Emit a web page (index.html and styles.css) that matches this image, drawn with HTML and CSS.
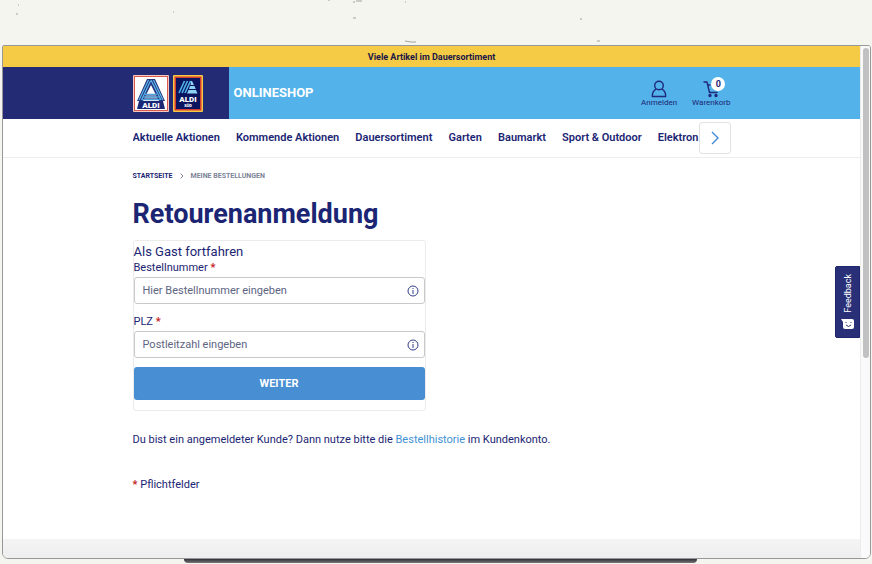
FILE: index.html
```html
<!DOCTYPE html>
<html lang="de">
<head>
<meta charset="utf-8">
<meta name="viewport" content="width=device-width, initial-scale=1">
<title>Retourenanmeldung</title>
<link rel="stylesheet" href="styles.css">
</head>
<body>
<svg class="specks" width="600" height="45" viewBox="0 0 600 45" aria-hidden="true">
  <path d="M16 14h2M18 5h1M173 12h1M328 0h2M353 2h2M356 1h6M405 2h1M353 18h3M405 41l6 1h5M580 19h2M597 41h3" fill="none" stroke="#a3a39f"/>
</svg>
<div class="window">
  <div class="page">
    <div class="promo">Viele Artikel im Dauersortiment</div>
    <header class="header">
      <div class="container header-row">
        <a class="brand" href="#" aria-label="Startseite">
          <svg width="36" height="37" viewBox="0 0 36 37" aria-hidden="true">
            <rect width="36" height="37" rx="1" fill="#f4c9c2"/>
            <rect x="1" y="1" width="34" height="35" fill="#d9594c"/>
            <rect x="2" y="2" width="32" height="33" fill="#fff"/>
            <path d="M14 4h8l10 22h-6L18 10l-8 16H4z" fill="#26307c"/>
            <path d="M15.500 5 6 25M17.500 6 8.500 25M18 5l10 20M20.500 5l9.500 20" fill="none" stroke="#58b5e8" stroke-width="1.300"/>
            <path d="M12 19.500h12M10 22h16M9 24.500h18" stroke="#4aa4dc" stroke-width="1.500"/>
            <path d="M12 20.800h13M10 23.300h16" stroke="#26307c" stroke-width=".7"/>
            <path d="M6 26h24l2 8H4z" fill="#1b2875"/>
            <text class="logo-text" x="18" y="33" font-size="8">ALDI</text>
          </svg>
          <svg width="30" height="37" viewBox="0 0 30 37" aria-hidden="true">
            <rect width="30" height="37" rx="1" fill="#f6c944"/>
            <rect x="1.500" y="1.500" width="27" height="34" fill="#d43b31"/>
            <rect x="3" y="3" width="24" height="31" fill="#0b155f"/>
            <path d="M11.500 6 6 18M14.500 6 9 18M17.500 6 12 18" fill="none" stroke="#4fb3ea" stroke-width="1.600"/>
            <path d="M18 6h1l2 4h-3.500zM17 11h4.500l1.200 3H16zM15.500 15H23l1.500 3.500H14z" fill="#8fd3f3"/>
            <text class="logo-text" x="15" y="27" font-size="8">ALDI</text>
            <text class="logo-text" x="15" y="32" font-size="4">SÜD</text>
          </svg>
        </a>
        <span class="shop-name">ONLINESHOP</span>
        <div class="actions">
          <a class="action" href="#">
            <svg width="16" height="18" viewBox="0 0 16 18" fill="none" stroke="#20297c" stroke-width="1.400" stroke-linecap="round" stroke-linejoin="round" aria-hidden="true">
              <circle cx="8" cy="5.500" r="4.300"/>
              <path d="M4.700 9.300C2.500 10.400 1.300 12.600 1.300 16.500h13.400c0-3.900-1.200-6.100-3.400-7.200"/>
            </svg>
            Anmelden
          </a>
          <a class="action" href="#">
            <span class="cart">
              <svg width="16" height="18" viewBox="0 0 16 18" fill="none" stroke="#20297c" stroke-width="1.400" stroke-linecap="round" stroke-linejoin="round" aria-hidden="true">
                <path d="M1 2h3l2.500 10.500H14M5 5h2"/>
                <circle cx="7" cy="15.500" r="1" fill="#20297c"/>
                <circle cx="13" cy="15.500" r="1" fill="#20297c"/>
              </svg>
              <span class="badge">0</span>
            </span>
            Warenkorb
          </a>
        </div>
      </div>
    </header>
    <nav class="nav" aria-label="Hauptnavigation">
      <div class="container nav-row">
        <div class="nav-links">
          <a href="#">Aktuelle Aktionen</a>
          <a href="#">Kommende Aktionen</a>
          <a href="#">Dauersortiment</a>
          <a href="#">Garten</a>
          <a href="#">Baumarkt</a>
          <a href="#">Sport &amp; Outdoor</a>
          <a href="#">Elektron</a>
        </div>
        <button class="nav-next" type="button" aria-label="Weitere Kategorien">
          <svg width="8" height="14" viewBox="0 0 8 14" fill="none" stroke="#3f87d0" stroke-width="1.400" aria-hidden="true"><path d="m1 1 6 6-6 6"/></svg>
        </button>
      </div>
    </nav>
    <main class="container main">
      <div class="breadcrumb">
        <a href="#">STARTSEITE</a>
        <svg width="4" height="6" viewBox="0 0 4 6" fill="none" stroke="#7d8498" aria-hidden="true"><path d="m.5.5 2.500 2.500L.5 5.500"/></svg>
        <span>MEINE BESTELLUNGEN</span>
      </div>
      <h1>Retourenanmeldung</h1>
      <form class="guest">
        <h2>Als Gast fortfahren</h2>
        <label for="order">Bestellnummer <span class="req">*</span></label>
        <div class="field">
          <input id="order" type="text" placeholder="Hier Bestellnummer eingeben">
          <svg width="12" height="12" viewBox="0 0 12 12" fill="none" stroke="#333d8b" aria-hidden="true"><circle cx="6" cy="6" r="5"/><path d="M6 5v4M6 3v1"/></svg>
        </div>
        <label for="zip">PLZ <span class="req">*</span></label>
        <div class="field">
          <input id="zip" type="text" placeholder="Postleitzahl eingeben">
          <svg width="12" height="12" viewBox="0 0 12 12" fill="none" stroke="#333d8b" aria-hidden="true"><circle cx="6" cy="6" r="5"/><path d="M6 5v4M6 3v1"/></svg>
        </div>
        <button class="submit" type="submit">WEITER</button>
      </form>
      <p class="hint">Du bist ein angemeldeter Kunde? Dann nutze bitte die <a href="#">Bestellhistorie</a> im Kundenkonto.</p>
      <p class="required-note"><span class="req">*</span> Pflichtfelder</p>
    </main>
    <footer class="footer"></footer>
    <button class="feedback" type="button">
      <span>Feedback</span>
      <svg width="13" height="12" viewBox="0 0 13 12" aria-hidden="true"><path d="M0 1h11q2 0 2 2v6q0 2-2 2H4q-2 0-2-2V4z" fill="#fff"/><path d="M5 4v1M10 4v1M5 7q2.500 3 5 0" fill="none" stroke="#26307c"/></svg>
    </button>
  </div>
  <div class="scroll" aria-hidden="true"><div class="thumb"></div></div>
</div>
<div class="stand"></div>
</body>
</html>
```
FILE: styles.css
```css
* { box-sizing: border-box; }

body {
  margin: 0;
  padding: 45px 1px 0 2px;
  background: #f4f5ee;
  color: #1b2573;
  font-family: Roboto, "Liberation Sans", sans-serif;
  font-size: 11px;
  line-height: 16px;
}

a { color: inherit; text-decoration: none; }
button, input { font: inherit; }
h1, h2, p { margin: 0; }

.specks { position: absolute; top: 0; left: 0; }

.window {
  display: flex;
  overflow: hidden;
  border: 1px solid #98989a;
  border-radius: 2px 3px 6px 6px;
  background: #fff;
}

.page { position: relative; flex: 1; min-width: 0; }

.container { width: 70%; max-width: 598px; margin: 0 auto; }

.promo {
  padding: 3px 0 2px;
  background: #f5ca45;
  color: #1a1648;
  font-size: 9px;
  font-weight: 700;
  text-align: center;
}

.header { background: linear-gradient(to right, #232b74 calc(50% - 202px), #52b2e9 0); }
.header-row { display: flex; align-items: center; height: 52px; }
.brand { display: flex; gap: 4px; }
.brand svg { display: block; }
.logo-text { fill: #fff; font-weight: 900; text-anchor: middle; }
.shop-name { margin-left: 31px; color: #fff; font-size: 13px; font-weight: 700; }

.actions { display: flex; gap: 15px; margin-left: auto; }
.action {
  display: flex;
  flex-direction: column;
  align-items: center;
  font-size: 8px;
  line-height: 9px;
}
.cart { position: relative; }
.cart svg { display: block; }
.badge {
  position: absolute;
  top: -3px;
  left: 8px;
  width: 14px;
  border-radius: 7px;
  background: #fff;
  font-size: 9px;
  font-weight: 700;
  line-height: 14px;
  text-align: center;
}

.nav { border-bottom: 1px solid #ededed; }
.nav-row { display: flex; align-items: center; height: 38px; }
.nav-links {
  display: flex;
  flex: 1;
  justify-content: space-between;
  overflow: hidden;
  font-weight: 600;
  white-space: nowrap;
}
.nav-next {
  display: flex;
  align-items: center;
  justify-content: center;
  width: 32px;
  height: 32px;
  padding: 0;
  border: 1px solid #e2e2e4;
  border-radius: 3px;
  background: #fff;
}

.main { padding-top: 10px; }
.breadcrumb {
  display: flex;
  align-items: center;
  gap: 7px;
  font-size: 7px;
  font-weight: 700;
}
.breadcrumb span { color: #7d8498; }

h1 { margin: 14px 0 10px; font-size: 27px; line-height: 32px; }

.guest {
  display: flex;
  flex-direction: column;
  width: 49%;
  padding-bottom: 10px;
  border: 1px solid #ebebec;
  border-radius: 3px;
}
h2 { margin-top: 1px; font-size: 13px; font-weight: 400; line-height: 19px; }
.guest label { line-height: 14px; }
.req { color: #c4211b; font-weight: 700; }
.field { display: flex; align-items: center; margin: 2px 0 9px; border: 1px solid #c9c9cb; border-radius: 3px; }
.field + label { margin-top: 2px; }
.field input {
  flex: 1;
  min-width: 0;
  height: 25px;
  padding: 0 8px;
  border: 0;
  background: transparent;
  color: #1b2573;
}
.field input::placeholder { color: #5d6582; opacity: 1; }
.field svg { margin-right: 5px; }
.submit {
  height: 33px;
  border: 0;
  border-radius: 3px;
  background: #488ed2;
  color: #fff;
  font-weight: 700;
}

.hint { margin-top: 21px; }
.hint a { color: #3f91d3; }
.required-note { margin-top: 29px; }
.footer { height: 19px; margin-top: 46px; background: linear-gradient(#f4f4f4, #eee); }

.feedback {
  position: absolute;
  top: 220px;
  right: 0;
  display: flex;
  flex-direction: column;
  align-items: center;
  justify-content: space-between;
  width: 25px;
  height: 72px;
  padding: 7px 0;
  border: 1px solid #1d266d;
  border-radius: 2px 0 0 2px;
  background: #293078;
  color: #fff;
}
.feedback span {
  font-size: 9px;
  line-height: 12px;
  writing-mode: vertical-rl;
  transform: rotate(180deg);
}

.scroll { width: 10px; padding: 2px; border-left: 1px solid #ececec; background: #fafafa; }
.thumb { width: 6px; height: 61%; border-radius: 3px; background: #c1c1c1; }

.stand {
  width: 59%;
  height: 4px;
  margin-left: 21%;
  border-radius: 0 0 6px 6px;
  background: linear-gradient(#2f2f34, #77777b);
}
```
